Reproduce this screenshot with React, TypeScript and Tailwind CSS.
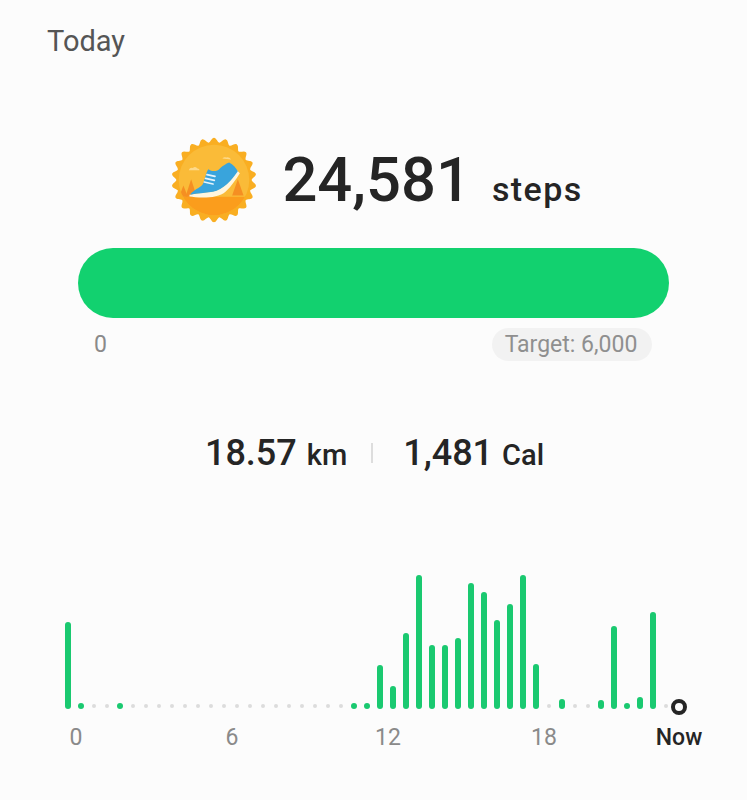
const GREEN = 'bg-[#1ac970]';

// one entry per half hour: number = bar height, 'dot' = small green dot, null = empty grey dot
type Slot = number | 'dot' | null;
const slots: Slot[] = [
  87, 'dot', null, null, 'dot', null, null, null, null, null, null, null,
  null, null, null, null, null, null, null, null, null, null, 'dot', 'dot',
  44, 23, 76, 134, 64, 64, 71, 126, 117, 89, 105, 134,
  45, null, 10, null, null, 9, 83, 'dot', 12, 97, null,
];

const hourLabels = [
  { text: '0', margin: 'ml-[26px]' },
  { text: '6', margin: 'ml-[56px]' },
  { text: '12', margin: 'ml-[56px]' },
  { text: '18', margin: 'ml-[56px]' },
];

// wavy badge edge: peaks on the outer radius, valleys on the inner one
function scallopPath(cx: number, cy: number, outer: number, inner: number, bumps: number) {
  const pt = (r: number, a: number) => `${(cx + Math.cos(a) * r).toFixed(1)} ${(cy + Math.sin(a) * r).toFixed(1)}`;
  let d = `M ${pt(inner, 0)} `;
  for (let i = 0; i < bumps; i++) {
    const step = (Math.PI * 2) / bumps;
    const a = i * step;
    d += `C ${pt(inner + 2, a + step * 0.2)} ${pt(outer, a + step * 0.3)} ${pt(outer, a + step * 0.5)} `;
    d += `C ${pt(outer, a + step * 0.7)} ${pt(inner + 2, a + step * 0.8)} ${pt(inner, a + step)} `;
  }
  return `${d}Z`;
}

function ShoeBadge() {
  return (
    <svg viewBox="38 20 250 256" className="w-[84px] h-[86px] shrink-0">
      <defs>
        <clipPath id="badge-inner">
          <circle cx="163" cy="148" r="105" />
        </clipPath>
      </defs>
      <path d={scallopPath(163, 148, 126, 112, 22)} fill="#f9ae22" />
      <circle cx="163" cy="148" r="105" fill="#fabb38" />
      <g clipPath="url(#badge-inner)">
        <rect x="50" y="198" width="230" height="70" fill="#fb9d1c" />
        <path d="M95 146 L112 198 L78 198 Z" fill="#f58f22" />
        <path d="M72 164 L85 198 L59 198 Z" fill="#f58f22" />
        <path d="M234 146 L251 194 L217 194 Z" fill="#f58f22" />
      </g>
      <path d="M88 119 q3 -9 12 -7 q8 -6 14 2 q6 0 6 5 Z" fill="#fdd98a" />
      <path d="M188 84 q5 -6 12 -3 q8 -2 14 6 Z" fill="#fdd98a" />
      <path d="M90 197 C112 200 172 206 198 182 C216 166 228 146 240 128 L232 120 C216 146 190 176 160 182 C136 186 112 186 90 192 Z" fill="#fff6df" />
      <path
        d="M92 192 C100 178 122 172 130 160 C136 146 140 124 146 116 C158 124 172 124 182 112 C190 106 198 100 208 96 C220 102 228 112 234 122 C216 148 190 178 160 183 C136 187 112 187 92 192 Z"
        fill="#39a4dc"
      />
      <path d="M134 154 L160 160 M138 143 L164 149 M142 132 L166 137" stroke="#e6f4fb" strokeWidth="5" strokeLinecap="round" />
    </svg>
  );
}

export default function App() {
  return (
    <div className="w-[747px] h-[800px] bg-[#fcfcfc] overflow-hidden font-['Roboto',sans-serif]">
      <div className="pt-[24px] pl-[47px] text-[29px] leading-[34px] text-[#555555]">Today</div>

      <div className="mt-[79px] flex items-center justify-center h-[86px] pl-[8px]">
        <ShoeBadge />
        <span className="ml-[26px] mt-[2px] text-[61.5px] leading-none font-medium text-[#252525]">24,581</span>
        <span className="ml-[21px] mt-[18px] text-[34px] leading-none font-medium tracking-[1.4px] text-[#252525]">steps</span>
      </div>

      <div className="mt-[25px] mx-[78px] h-[70px] rounded-full bg-[#12d16f]" />

      <div className="mt-[10px] ml-[94px] mr-[95px] flex items-center justify-between">
        <span className="text-[23px] leading-none text-[#8a8a8a]">0</span>
        <span className="w-[160px] h-[33px] pt-[2px] pr-[2px] rounded-full bg-[#f2f2f2] flex items-center justify-center text-[23px] text-[#8f8f8f]">
          Target: 6,000
        </span>
      </div>

      <div className="mt-[73px] flex items-baseline justify-center h-[38px] text-[#252525] pl-[2px]">
        <span className="text-[36px] leading-[38px] font-medium">18.57</span>
        <span className="ml-[10px] text-[29px] leading-[38px] font-medium">km</span>
        <span className="ml-[24px] mr-[30px] self-center w-[2px] h-[20px] bg-[#dddddd]" />
        <span className="text-[36px] leading-[38px] font-medium">1,481</span>
        <span className="ml-[9px] text-[29px] leading-[38px] font-medium">Cal</span>
      </div>

      <div className="mt-[99px] ml-[61px] flex items-end h-[138px]">
        {slots.map((slot, i) =>
          typeof slot === 'number' ? (
            <div key={i} className="w-[13px] flex justify-center">
              <div className={`w-[6px] rounded-full ${GREEN}`} style={{ height: slot }} />
            </div>
          ) : (
            <div key={i} className="w-[13px] h-[6px] flex items-center justify-center">
              {slot === 'dot' ? (
                <div className={`w-[6px] h-[6px] rounded-full ${GREEN}`} />
              ) : (
                <div className="w-[4px] h-[4px] rounded-full bg-[#dcdcdc]" />
              )}
            </div>
          ),
        )}
        <div className="w-[16px] h-[16px] mb-[-6px] ml-[-1px] rounded-full border-[4px] border-[#252525]" />
      </div>

      <div className="mt-[15px] flex items-center text-[23px] leading-[28px] text-[#8a8a8a]">
        {hourLabels.map((label) => (
          <div key={label.text} className={`w-[100px] text-center ${label.margin}`}>
            {label.text}
          </div>
        ))}
        <div className="w-[100px] ml-[35px] text-center font-medium text-[#252525]">Now</div>
      </div>
    </div>
  );
}
